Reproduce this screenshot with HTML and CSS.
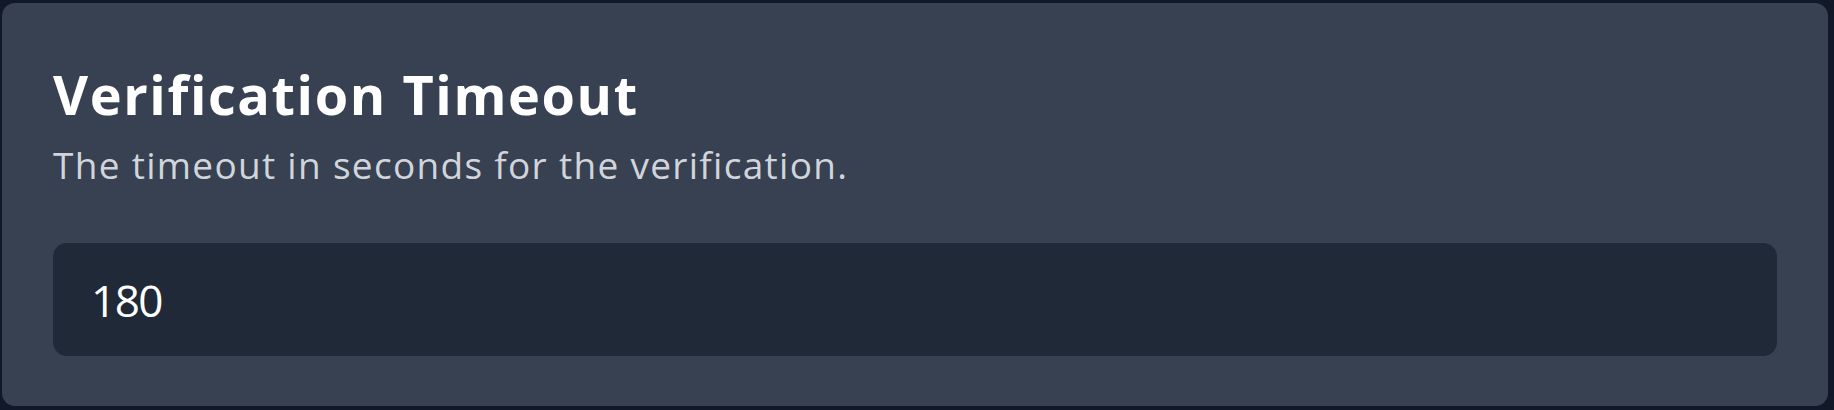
FILE: index.html
```html
<!DOCTYPE html>
<html lang="en">
<head>
  <meta charset="UTF-8" />
  <meta name="viewport" content="width=device-width, initial-scale=1" />
  <title>Verification Timeout</title>
  <link rel="stylesheet" href="styles.css">
</head>
<body>
  <div class="setting-card">
    <h3 class="setting-title">Verification Timeout</h3>
    <p class="setting-desc">The timeout in seconds for the verification.</p>
    <input class="setting-input" type="text" value="180" />
  </div>
</body>
</html>
```

FILE: styles.css
```css
html, body {
  margin: 0;
  height: 100%;
  background-color: #111827; /* page behind the card */
  font-family: 'Open Sans', 'Noto Sans', sans-serif;
}

body {
  padding: 3px 6px 4px 2px;
  box-sizing: border-box;
}

.setting-card {
  background: #374151;
  border-radius: 13px;
  padding: 61px 51px 50px 51px;
  display: flex;
  flex-direction: column;
}

.setting-title {
  margin: 0;
  color: #ffffff;
  font-size: 54px;
  line-height: 60px;
  font-weight: 700;
  letter-spacing: 1.6px;
}

.setting-desc {
  margin: 21px 0 0 0;
  color: #d1d5db;
  font-size: 37px;
  line-height: 40px;
  letter-spacing: 1.3px;
}

.setting-input {
  margin-top: 58px;
  height: 113px;
  box-sizing: border-box;
  padding: 0 38px;
  border: none;
  border-radius: 14px;
  background: #1f2937;
  color: #ffffff;
  font-family: 'Open Sans', 'Noto Sans', sans-serif;
  font-size: 44px;
  font-weight: 500;
  letter-spacing: -1.5px;
  outline: none;
}
```
